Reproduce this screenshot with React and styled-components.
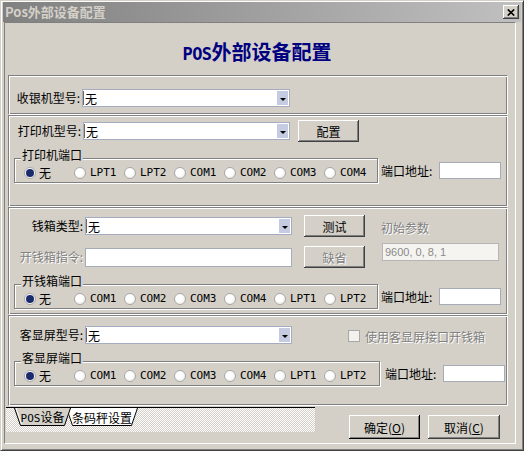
import React from 'react';
import styled, { createGlobalStyle } from 'styled-components';

const printerPorts = ['无', 'LPT1', 'LPT2', 'COM1', 'COM2', 'COM3', 'COM4'];
const serialPorts = ['无', 'COM1', 'COM2', 'COM3', 'COM4', 'LPT1', 'LPT2'];

const GlobalStyle = createGlobalStyle`
	* {
		box-sizing: border-box;
	}
	html,
	body {
		margin: 0;
		padding: 0;
		background: #d4d0c8;
	}
	body {
		font-family: 'Noto Sans CJK SC', 'DejaVu Sans', sans-serif;
		font-size: 12px;
		line-height: 14px;
		color: #000;
	}
`;

const PortList = ({ ports, caption, width = 364 }) => (
	<PortRow>
		<GroupBox $w={width}>
			<GroupCaption>{caption}</GroupCaption>
			<RadioList>
				{ports.map((p, i) => (
					<RadioItem key={p}>
						<RadioDot $checked={i === 0} />
						<RadioText $mono={p !== '无'}>{p}</RadioText>
					</RadioItem>
				))}
			</RadioList>
		</GroupBox>
		<PortLabel $gap={width > 364 ? 5 : 3}>端口地址:</PortLabel>
		<Edit $w={62} $h={17} />
	</PortRow>
);

const Combo = ({ width = 207, value = '无' }) => (
	<ComboBox $w={width}>
		<ComboText>{value}</ComboText>
		<DropButton>
			<Arrow />
		</DropButton>
	</ComboBox>
);

const App = () => {
	return (
		<>
			<GlobalStyle />
			<Window>
				<TitleBar>
					<TitleText>Pos外部设备配置</TitleText>
					<CloseButton aria-label="关闭">
						<svg width="8" height="7" viewBox="0 0 8 7">
							<path d="M0.8 0.5 L7.2 6.5 M7.2 0.5 L0.8 6.5" stroke="#000" strokeWidth="1.7" />
						</svg>
					</CloseButton>
				</TitleBar>
				<Page>
					<Header>
						<Heading>
							<Mono>POS</Mono>外部设备配置
						</Heading>
					</Header>

					<Section $h={40} $pt={13}>
						<Row $h={18}>
							<Label $w={68}>收银机型号:</Label>
							<Combo width={208} />
						</Row>
					</Section>

					<Section $h={92} $pt={4}>
						<Row>
							<Label $w={69}>打印机型号:</Label>
							<Combo width={207} />
							<Button $ml={8}>配置</Button>
						</Row>
						<Spacer $h={16} />
						<PortList ports={printerPorts} caption="打印机端口" />
					</Section>

					<Section $h={108} $pt={7}>
						<Row>
							<Label $w={71}>钱箱类型:</Label>
							<Combo width={207} />
							<Button $ml={12}>测试</Button>
							<Hint $ml={16}>初始参数</Hint>
						</Row>
						<Spacer $h={9} />
						<Row>
							<Label $w={71} $disabled>
								开钱箱指令:
							</Label>
							<Edit $w={207} $h={19} />
							<Button $ml={12} disabled>
								缺省
							</Button>
							<ParamEdit>9600, 0, 8, 1</ParamEdit>
						</Row>
						<Spacer $h={16} />
						<PortList ports={serialPorts} caption="开钱箱端口" />
					</Section>

					<Section $h={91} $pt={8}>
						<Row>
							<Label $w={71}>客显屏型号:</Label>
							<Combo width={207} />
							<CheckItem>
								<CheckBox />
								<Hint $ml={0}>使用客显屏接口开钱箱</Hint>
							</CheckItem>
						</Row>
						<Spacer $h={15} />
						<PortList ports={serialPorts} caption="客显屏端口" width={366} />
					</Section>

					<Footer>
						<TabStrip>
							<Tab $w={57} $active>
								<TabShape viewBox="0 0 57 18" preserveAspectRatio="none">
									<path d="M0 0 L6 17.5 L51 17.5 L57 0 Z" fill="#d4d0c8" stroke="none" />
									<path d="M0.5 0 L6.5 17.5 L50.5 17.5 L56.5 0" fill="none" stroke="#000" />
									<path d="M2 0 L7.5 16" fill="none" stroke="#fff" />
								</TabShape>
								<TabLabel>
									<Mono $size={11}>POS</Mono>设备
								</TabLabel>
							</Tab>
							<Tab $w={72} $ml={-5}>
								<TabShape viewBox="0 0 72 18" preserveAspectRatio="none">
									<path d="M0 0 L6 17.5 L66 17.5 L72 0 Z" fill="#fff" stroke="none" />
									<path d="M0.5 0 L6.5 17.5 L65.5 17.5 L71.5 0" fill="none" stroke="#000" />
								</TabShape>
								<TabLabel>条码秤设置</TabLabel>
							</Tab>
						</TabStrip>
						<DialogButtons>
							<Button $w={71} $h={24} $default>
								确定(<u>O</u>)
							</Button>
							<Button $w={72} $h={24}>
								取消(<u>C</u>)
							</Button>
						</DialogButtons>
					</Footer>
				</Page>
			</Window>
		</>
	);
};

const Window = styled.div`
	width: 524px;
	height: 451px;
	background: #d4d0c8;
	border: 1px solid;
	border-color: #d4d0c8 #404040 #404040 #d4d0c8;
	box-shadow: inset 1px 1px #fff, inset -1px -1px #808080;
	padding: 1px 3px 3px 3px;
	display: flex;
	flex-direction: column;
`;

const TitleBar = styled.div`
	height: 20px;
	margin: 0 -1px;
	padding: 0 2px 0 2px;
	display: flex;
	align-items: center;
	justify-content: space-between;
	background: linear-gradient(to right, #808080, #c0c0c0);
`;

const TitleText = styled.span`
	color: #d4d0c8;
	font-weight: bold;
	font-size: 13px;
	line-height: 16px;
`;

const CloseButton = styled.button`
	width: 16px;
	height: 14px;
	padding: 0;
	border: none;
	background: #d4d0c8;
	box-shadow: inset -1px -1px #404040, inset 1px 1px #fff, inset -2px -2px #808080;
	display: flex;
	align-items: center;
	justify-content: center;
`;

const Page = styled.div`
	width: 512px;
	height: 422px;
	border: 1px solid;
	border-color: #808080 #fff #fff #808080;
	display: flex;
	flex-direction: column;
`;

const Header = styled.div`
	height: 52px;
	flex: none;
	display: flex;
	justify-content: center;
	padding: 17px 6px 0 0;
`;

const Heading = styled.h1`
	margin: 0;
	font-size: 20px;
	line-height: 24px;
	font-weight: bold;
	color: #000080;
`;

const Mono = styled.span`
	font-family: 'DejaVu Sans Mono', monospace;
	font-size: ${(p) => (p.$size ? `${p.$size}px` : '17px')};
	letter-spacing: ${(p) => (p.$size ? '0' : '-0.5px')};
`;

const Section = styled.div`
	height: ${(p) => p.$h}px;
	width: 500px;
	margin-left: 3px;
	flex: none;
	border: 1px solid;
	border-color: #808080 #fff #fff #808080;
	box-shadow: inset 1px 1px #fff, inset -1px -1px #808080;
	padding: ${(p) => p.$pt}px 0 0 5px;
	display: flex;
	flex-direction: column;
`;

const Row = styled.div`
	height: ${(p) => p.$h || 22}px;
	display: flex;
	align-items: center;
`;

const Spacer = styled.div`
	height: ${(p) => p.$h}px;
	flex: none;
`;

const Label = styled.span`
	width: ${(p) => p.$w}px;
	flex: none;
	text-align: right;
	padding-right: 2px;
	white-space: nowrap;
	color: ${(p) => (p.$disabled ? '#808080' : '#000')};
	text-shadow: ${(p) => (p.$disabled ? '1px 1px #fff' : 'none')};
`;

const ComboBox = styled.div`
	width: ${(p) => p.$w}px;
	height: 18px;
	flex: none;
	display: flex;
	background: #fff;
	border: 1px solid #a5acc0;
`;

const ComboText = styled.span`
	flex: 1;
	padding-left: 2px;
	line-height: 16px;
	box-shadow: inset 1px 0 #6a6a6a;
	margin: 1px 0;
`;

const DropButton = styled.span`
	width: 11px;
	margin: 1px;
	background: #c5cbe0;
	display: flex;
	align-items: center;
	justify-content: center;
	padding-top: 2px;
`;

const Arrow = styled.span`
	width: 0;
	height: 0;
	border-left: 3px solid transparent;
	border-right: 3px solid transparent;
	border-top: 3px solid #000;
`;

const Edit = styled.div`
	width: ${(p) => p.$w}px;
	height: ${(p) => p.$h}px;
	flex: none;
	background: #fff;
	border: 1px solid #a5acb5;
`;

const ParamEdit = styled.div`
	width: 117px;
	height: 18px;
	flex: none;
	align-self: flex-start;
	margin: -3px 0 0 17px;
	padding-left: 2px;
	background: #f5f4f0;
	border: 1px solid #b5b5b5;
	color: #8a8a8a;
	font-family: 'Liberation Sans', sans-serif;
	font-size: 11px;
	line-height: 16px;
`;

const Button = styled.button`
	width: ${(p) => p.$w || 61}px;
	height: ${(p) => p.$h || 22}px;
	margin-left: ${(p) => p.$ml || 0}px;
	flex: none;
	padding: 0;
	border: none;
	background: #d4d0c8;
	box-shadow: ${(p) =>
		p.$default
			? 'inset -1px -1px #000, inset 1px 1px #fff, inset -2px -2px #808080'
			: 'inset -1px -1px #404040, inset 1px 1px #fff, inset -2px -2px #808080'};
	font-family: inherit;
	font-size: 12px;
	color: ${(p) => (p.disabled ? '#808080' : '#000')};
	text-shadow: ${(p) => (p.disabled ? '1px 1px #fff' : 'none')};

	u {
		text-decoration: underline;
	}
`;

const Hint = styled.span`
	margin-left: ${(p) => p.$ml}px;
	padding-top: 3px;
	color: #808080;
	text-shadow: 1px 1px #fff;
	white-space: nowrap;
`;

const CheckItem = styled.label`
	margin-left: 56px;
	display: flex;
	align-items: center;
	gap: 5px;
`;

const CheckBox = styled.span`
	width: 12px;
	height: 12px;
	margin-top: 2px;
	background: #f2f1ed;
	border: 1px solid #a8a8a8;
`;

const PortRow = styled.div`
	display: flex;
	align-items: center;
`;

const GroupBox = styled.div`
	position: relative;
	width: ${(p) => p.$w}px;
	height: 25px;
	flex: none;
	border: 1px solid #808080;
	box-shadow: inset 1px 1px #fff, 1px 1px #fff;
`;

const GroupCaption = styled.span`
	position: absolute;
	left: 6px;
	top: -10px;
	padding: 0 1px;
	background: #d4d0c8;
	line-height: 12px;
`;

const RadioList = styled.div`
	height: 100%;
	display: flex;
	align-items: center;
	padding: 4px 0 0 9px;
`;

const RadioItem = styled.label`
	width: 50px;
	flex: none;
	display: flex;
	align-items: center;
	gap: 3px;
`;

const RadioDot = styled.span`
	width: 12px;
	height: 12px;
	flex: none;
	border-radius: 50%;
	border: 1px solid #a9a9a9;
	background: radial-gradient(circle at 40% 40%, #fff 0 40%, #e4e2da 100%);
	display: flex;
	align-items: center;
	justify-content: center;

	&::after {
		content: '';
		width: 8px;
		height: 8px;
		border-radius: 50%;
		background: ${(p) => (p.$checked ? '#1b2b6b' : 'transparent')};
	}
`;

const RadioText = styled.span`
	font-family: ${(p) =>
		p.$mono ? "'DejaVu Sans Mono', monospace" : 'inherit'};
	font-size: ${(p) => (p.$mono ? '11px' : '12px')};
	line-height: 12px;
	padding-left: ${(p) => (p.$mono ? '1px' : '0')};
`;

const PortLabel = styled.span`
	width: 58px;
	flex: none;
	margin-left: ${(p) => p.$gap}px;
	white-space: nowrap;
`;

const Footer = styled.div`
	flex: 1;
	display: flex;
	align-items: flex-start;
`;

const TabStrip = styled.div`
	width: 309px;
	height: 25px;
	margin: 1px 0 0 1px;
	padding-left: 8px;
	border-top: 1px solid #000;
	background-color: #fff;
	background-image: repeating-conic-gradient(#d4d0c8 0 25%, #fff 0 50%);
	background-size: 2px 2px;
	display: flex;
	align-items: flex-start;
`;

const Tab = styled.div`
	position: relative;
	width: ${(p) => p.$w}px;
	height: 18px;
	flex: none;
	margin-left: ${(p) => p.$ml || 0}px;
	z-index: ${(p) => (p.$active ? 2 : 1)};
	display: flex;
	align-items: center;
	justify-content: center;
`;

const TabShape = styled.svg`
	position: absolute;
	inset: 0;
	width: 100%;
	height: 100%;
`;

const TabLabel = styled.span`
	position: relative;
	line-height: 14px;
	padding-top: 1px;
`;

const DialogButtons = styled.div`
	display: flex;
	gap: 8px;
	margin: 9px 0 0 34px;
`;

export default App;
